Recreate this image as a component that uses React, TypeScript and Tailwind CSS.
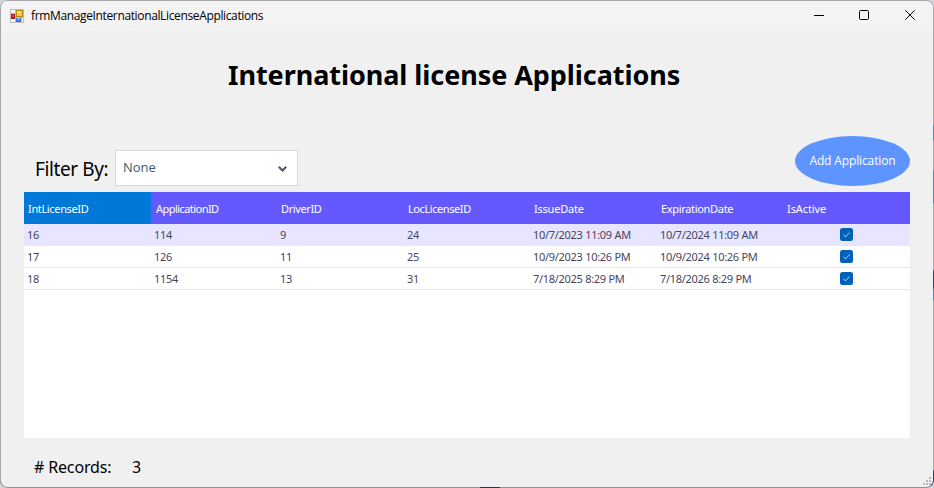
import React from "react";

type Row = { id: string; app: string; driver: string; loc: string; issue: string; exp: string };

const rows: Row[] = [
  { id: "16", app: "114", driver: "9", loc: "24", issue: "10/7/2023 11:09 AM", exp: "10/7/2024 11:09 AM" },
  { id: "17", app: "126", driver: "11", loc: "25", issue: "10/9/2023 10:26 PM", exp: "10/9/2024 10:26 PM" },
  { id: "18", app: "1154", driver: "13", loc: "31", issue: "7/18/2025 8:29 PM", exp: "7/18/2026 8:29 PM" },
];

const columns = "grid grid-cols-[127px_126px_127px_126px_127px_126px_127px]";

function FormIcon() {
  return (
    <svg className="-mt-px" width="14" height="14" viewBox="0 0 14 14" shapeRendering="crispEdges">
      <rect width="14" height="14" fill="#b9bdc2" />
      <rect x="1" y="1" width="4" height="3" fill="#f8f8f8" />
      <rect x="1" y="10" width="4" height="3" fill="#f8f8f8" />
      <rect x="12" y="9" width="1" height="4" fill="#f8f8f8" />
      <rect x="6" y="1" width="7" height="7" fill="#b88710" />
      <rect x="7" y="2" width="5" height="5" fill="#f7cc45" />
      <rect x="7" y="2" width="3" height="2" fill="#ffe58a" />
      <rect x="1" y="5" width="4" height="5" fill="#a91d1d" />
      <rect x="2" y="6" width="2" height="2" fill="#dc5147" />
      <rect x="6" y="9" width="5" height="4" fill="#3a72cf" />
      <rect x="7" y="9" width="3" height="2" fill="#7fb2f5" />
    </svg>
  );
}

function TitleBar() {
  return (
    <header className="flex h-[30px] shrink-0 items-center bg-[#f3f3f3] pl-[9px] pr-[18px]">
      <FormIcon />
      <span className="ml-[7px] text-[12px] leading-4 tracking-[-0.36px] text-black font-['Open_Sans',sans-serif]">
        frmManageInternationalLicenseApplications
      </span>
      <div className="ml-auto flex items-center gap-9">
        <svg width="10" height="10" viewBox="0 0 10 10"><path d="M0 4.5h10" stroke="#000" /></svg>
        <svg className="-ml-px -mt-[2px]" width="10" height="10" viewBox="0 0 10 10"><rect x=".5" y=".5" width="9" height="9" rx="1" fill="none" stroke="#000" /></svg>
        <svg className="-mt-[2px]" width="10" height="10" viewBox="0 0 10 10"><path d="M.3.3l9.4 9.4M9.7.3.3 9.7" stroke="#000" /></svg>
      </div>
    </header>
  );
}

function CheckBox() {
  return (
    <svg width="13" height="13" viewBox="0 0 13 13">
      <rect width="13" height="13" rx="2.5" fill="#005fb8" />
      <path d="M3.4 6.8l2.1 2.1 4.2-4.4" fill="none" stroke="#d5e6f5" strokeWidth="0.9" />
    </svg>
  );
}

function Grid() {
  return (
    <div className="mx-[23px] h-[246px] bg-white text-[11px] leading-[14px]">
      <div className={`${columns} h-8 items-stretch bg-[#6459ff] text-white`}>
        <div className="flex items-center bg-[#0078d7] pl-1 pt-[2px] tracking-[-0.35px]">IntLicenseID</div>
        <div className="flex items-center pl-[5px] pt-[2px] tracking-[-0.55px]">ApplicationID</div>
        <div className="flex items-center pl-1 pt-[2px] tracking-[-0.38px]">DriverID</div>
        <div className="flex items-center pl-1 pt-[2px] tracking-[-0.42px]">LocLicenseID</div>
        <div className="flex items-center pl-1 pt-[2px] tracking-[-0.22px]">IssueDate</div>
        <div className="flex items-center pl-1 pt-[2px] tracking-[-0.32px]">ExpirationDate</div>
        <div className="flex items-center pl-1 pt-[2px] tracking-[-0.1px]">IsActive</div>
      </div>
      {rows.map((r, i) => (
        <div
          key={r.id}
          className={`${columns} h-[22px] items-center border-b border-[#e7e5ff] text-[#47455e] ${i === 0 ? "bg-[#e7e5ff]" : "bg-white"}`}
        >
          <span className="pl-[3px] tracking-[-0.3px]">{r.id}</span>
          <span className="pl-[3px] tracking-[-0.3px]">{r.app}</span>
          <span className="pl-[3px] tracking-[-0.3px]">{r.driver}</span>
          <span className="pl-[3px] tracking-[-0.3px]">{r.loc}</span>
          <span className="whitespace-nowrap pl-[3px] tracking-[-0.29px]">{r.issue}</span>
          <span className="whitespace-nowrap pl-[3px] tracking-[-0.29px]">{r.exp}</span>
          <span className="flex pl-[57px]"><CheckBox /></span>
        </div>
      ))}
    </div>
  );
}

function ResizeGrip() {
  return (
    <svg className="mb-[2px] mr-[2px]" width="8" height="8" viewBox="0 0 8 8" fill="#b8b8b8">
      <path d="M6 0h2v2H6zM3 3h2v2H3zM6 3h2v2H6zM0 6h2v2H0zM3 6h2v2H3zM6 6h2v2H6z" />
    </svg>
  );
}

export default function App() {
  return (
    <div className="h-[488px] w-[934px] bg-[linear-gradient(to_bottom,#d4d8dc_50%,#b8c0c6_97%,#d4d8dc_98%)] font-['Noto_Sans',sans-serif]">
      <div className="h-[488px] w-[934px] rounded-lg bg-[linear-gradient(to_bottom,#a5a7a9_0px,#a5a7a9_125px,#56879a_126px,#56879a_140px,#a3abad_141px,#a3abad_170px,#56879a_171px,#56879a_203px,#a3abad_204px,#a3abad_270px,#34485e_271px,#34485e_288px,#56879a_289px,#56879a_300px,#a5a7a9_301px,#a5a7a9_470px,#2c4258_471px,#2c4258_485px,#8c9397_486px)] p-px pl-0">
        <div className="flex h-[486px] w-[933px] flex-col overflow-hidden rounded-[7px] border-l border-[#a5a7a9] bg-[#f0f0f0]">
          <TitleBar />
          <h1 className="ml-[227px] mt-[25px] whitespace-nowrap text-[27px] font-bold leading-[38px] tracking-[-0.06px] text-black">
            International license Applications
          </h1>
          <div className="mx-[23px] mt-[42px] flex h-[56px] items-start">
            <label className="ml-[11px] mt-[19px] w-20 whitespace-nowrap text-[19px] leading-7 tracking-[-0.4px] text-black">Filter By:</label>
            <div className="mt-[14px] flex h-[36px] w-[183px] items-center justify-between border border-[#d5dade] bg-white pl-[7px] pr-[10px]">
              <span className="-mt-[2px] text-[13px] leading-4 text-[#445870] font-['Open_Sans',sans-serif]">None</span>
              <svg className="mt-px" width="9" height="6" viewBox="0 0 9 6"><path d="M.8.8 4.5 4.5 8.2.8" fill="none" stroke="#445870" strokeWidth="2" /></svg>
            </div>
            <button className="ml-auto flex h-[50px] w-[115px] items-center justify-center rounded-[50%] bg-[#5e94ff] text-[12px] tracking-[-0.13px] text-white font-['Open_Sans',sans-serif]">
              Add Application
            </button>
          </div>
          <Grid />
          <footer className="flex flex-1 items-end">
            <div className="mb-[8px] ml-[33px] flex text-[16px] leading-6 text-black">
              <span className="w-[98px] tracking-[-0.15px]"># Records:</span>
              <span>3</span>
            </div>
            <div className="ml-auto"><ResizeGrip /></div>
          </footer>
        </div>
        <div className="ml-[480px] h-px w-5 bg-[#26384a]" />
      </div>
    </div>
  );
}
